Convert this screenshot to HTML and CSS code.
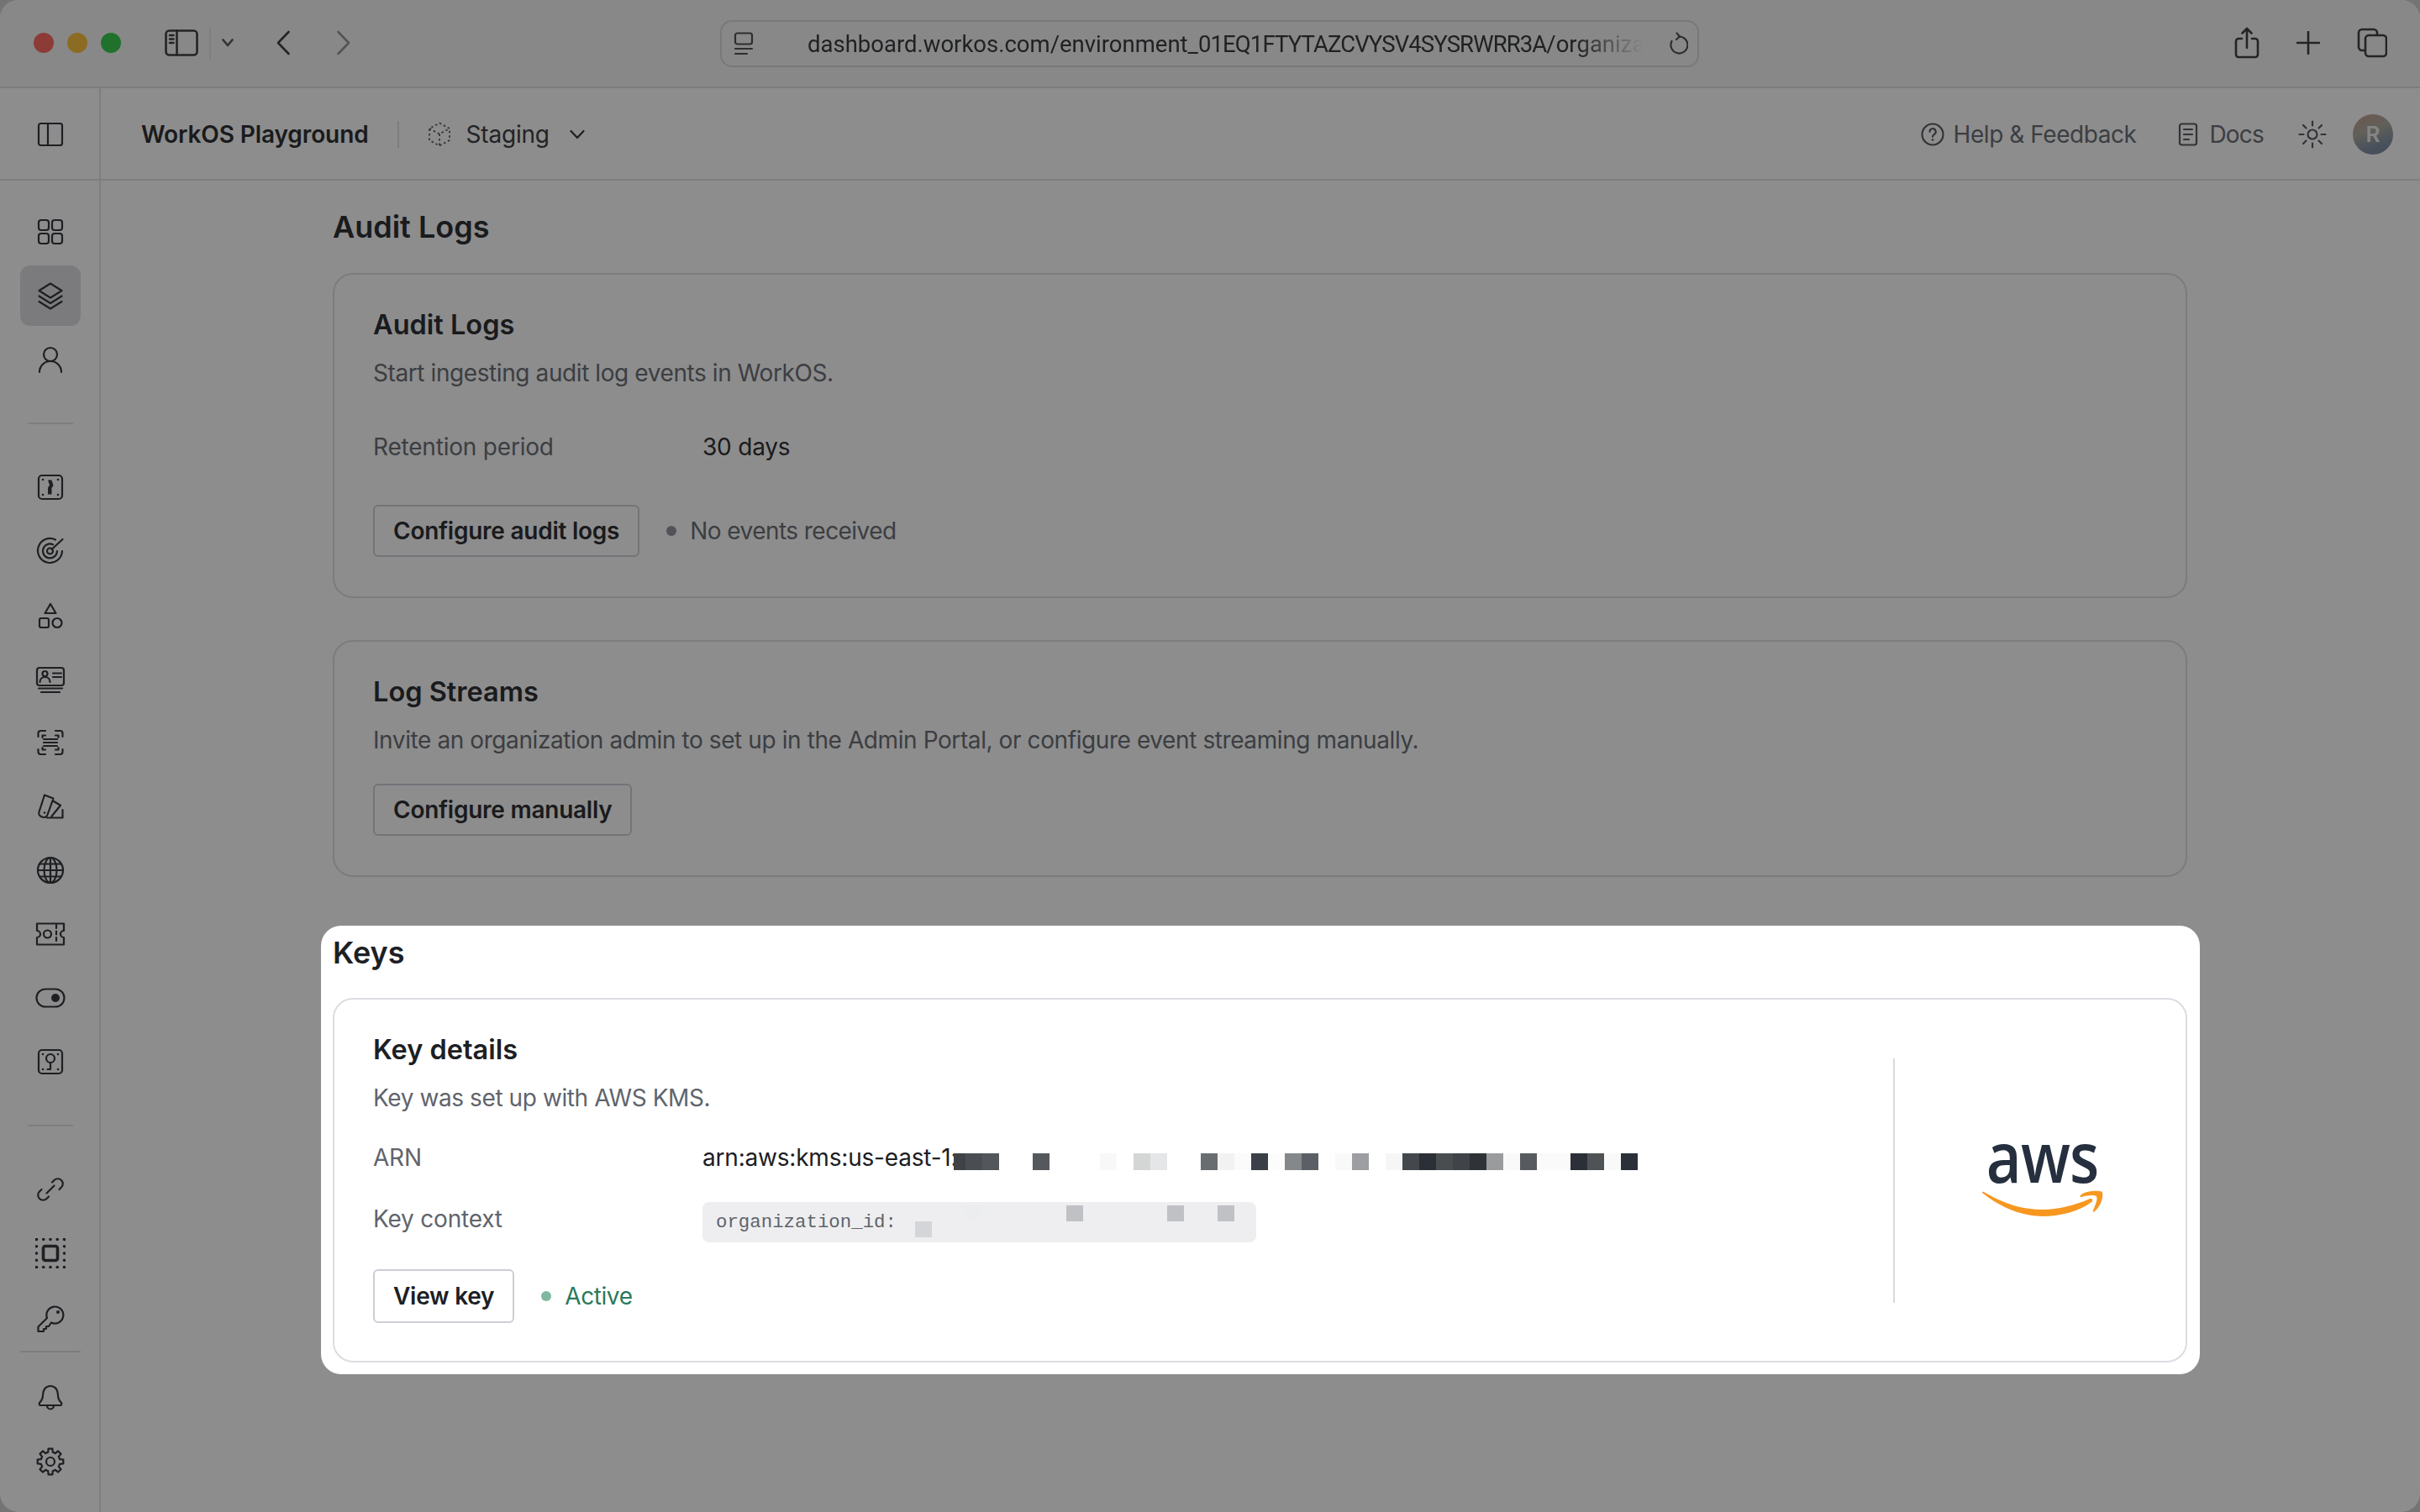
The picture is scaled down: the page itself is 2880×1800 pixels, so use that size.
FILE: index.html
```html
<!DOCTYPE html>
<html lang="en">
<head>
<meta charset="utf-8">
<title>WorkOS Playground</title>
<link rel="stylesheet" href="styles.css">
</head>
<body>
<div class="window">
  <header class="toolbar">
    <div class="lights"><span class="light red"></span><span class="light amber"></span><span class="light green"></span></div>
    <svg class="tb-sidebar" width="40" height="32" viewBox="0 0 40 32"><rect x="1.5" y="1.5" width="37" height="29" rx="4"/><path d="M14.5 1.5v29M6 7h4.5M6 11.500h4.500M6 16h4.500"/></svg>
    <span class="tb-sep"></span>
    <svg class="tb-chev" width="14" height="10" viewBox="0 0 14 10"><path d="M1.500 1.500 7 8l5.500-6.500"/></svg>
    <svg class="tb-back" width="18" height="30" viewBox="0 0 18 30"><path d="M15.500 2 3 15l12.500 13"/></svg>
    <svg class="tb-forward" width="18" height="30" viewBox="0 0 18 30"><path d="M2.500 2 15 15 2.500 28"/></svg>
    <div class="urlbar">
      <svg class="url-ico" width="24" height="28" viewBox="0 0 24 28"><rect x="2" y="1.500" width="20" height="13" rx="2.500"/><path d="M2 20h20M2 26h14"/></svg>
      <span class="url-text">dashboard.workos.com/environment_<span class="url-id">01EQ1FTYTAZCVYSV4SYSRWRR3A</span>/organizat</span>
      <svg class="url-reload" width="24" height="28" viewBox="0 0 24 28"><path d="M13 5.500A10 10 0 1 1 4.500 11"/><path d="M10.500 1.500 14 5.500l-4 3.500"/></svg>
    </div>
    <div class="tb-right">
      <svg class="tb-ico" width="30" height="38" viewBox="0 0 30 38"><path d="M9 14H5a3 3 0 0 0-3 3v16a3 3 0 0 0 3 3h20a3 3 0 0 0 3-3V17a3 3 0 0 0-3-3h-4M15 25V2M9.500 7.500 15 2l5.500 5.500"/></svg>
      <svg class="tb-ico tb-plus" width="28" height="28" viewBox="0 0 28 28"><path d="M14 1v26M1 14h26"/></svg>
      <svg class="tb-ico tb-tabs" width="36" height="36" viewBox="0 0 36 36"><path d="M9 27H6a4 4 0 0 1-4-4V6a4 4 0 0 1 4-4h14a4 4 0 0 1 4 4v3"/><rect x="10" y="9" width="25" height="25" rx="4"/></svg>
    </div>
  </header>

  <div class="app">
    <aside class="rail">
      <div class="rail-top">
        <svg class="ico" width="36" height="36" viewBox="0 0 36 36"><rect x="4" y="5" width="28" height="26" rx="2.500"/><path d="M15 5v26"/></svg>
      </div>
      <nav class="rail-nav">
        <a class="rail-item"><svg class="ico" width="36" height="36" viewBox="0 0 36 36"><rect x="4" y="4" width="12" height="12" rx="3"/><rect x="20" y="4" width="12" height="12" rx="3"/><rect x="4" y="20" width="12" height="12" rx="3"/><rect x="20" y="20" width="12" height="12" rx="3"/></svg></a>
        <a class="rail-item is-active"><svg class="ico" width="36" height="36" viewBox="0 0 36 36"><path d="M18 3.500 31.500 12 18 20.500 4.500 12zM4.500 18.500 18 27l13.500-8.500M4.500 25 18 33.500 31.500 25"/></svg></a>
        <a class="rail-item"><svg class="ico" width="36" height="36" viewBox="0 0 36 36"><circle cx="18" cy="12" r="8"/><path d="M5 33a13 13 0 0 1 26 0"/></svg></a>
        <div class="rail-rule"></div>
        <a class="rail-item"><svg class="ico" width="36" height="36" viewBox="0 0 36 36"><rect x="4" y="4" width="28" height="28" rx="4"/><path class="solid" d="M15 9.500h4.500l2 6.500-2 3v7.500H15v-8l2-3z"/><circle class="solid" cx="9" cy="9" r="1.300"/><circle class="solid" cx="27" cy="9" r="1.300"/><circle class="solid" cx="9" cy="27" r="1.300"/><circle class="solid" cx="27" cy="27" r="1.300"/></svg></a>
        <a class="rail-item"><svg class="ico" width="36" height="36" viewBox="0 0 36 36"><path d="M24 4.500A14.500 14.500 0 1 0 32 18M21 10.200A8.500 8.500 0 1 0 26 18"/><circle cx="17.500" cy="18" r="3.500"/><path d="M19.500 16 32.500 4"/></svg></a>
        <a class="rail-item"><svg class="ico" width="36" height="36" viewBox="0 0 36 36"><path d="M18 5l6.500 11h-13z"/><rect x="5" y="22" width="11" height="11" rx="2"/><circle cx="26" cy="27.500" r="5.500"/></svg></a>
        <a class="rail-item"><svg class="ico" width="36" height="36" viewBox="0 0 36 36"><rect x="2" y="5" width="32" height="21" rx="3"/><circle cx="11.500" cy="12" r="3"/><path d="M5.500 22c0-8 12-8 12 0M21 11.500h10M21 16h10M4 29.500h28M7 34h22"/></svg></a>
        <a class="rail-item"><svg class="ico" width="36" height="36" viewBox="0 0 36 36"><path d="M3.500 11V7a3 3 0 0 1 3-3H12M24 4h5.500a3 3 0 0 1 3 3v4M32.500 26v3a3 3 0 0 1-3 3H24M12 32H6.500a3 3 0 0 1-3-3v-3M8.500 12V9.500H12M24 9.500h3.500V12M27.500 24v2.500H24M12 26.500H8.500V24M10 14h16M10 18h16M10 22h16"/></svg></a>
        <a class="rail-item"><svg class="ico" width="36" height="36" viewBox="0 0 36 36"><path d="M11 4.500 21.500 8.500 14.500 28a4.500 4.500 0 0 1-5.500 2.800l-2-.7A4.500 4.500 0 0 1 4.500 24.500zM22 12l8 4.800-10.500 13M14 31.500h18.500V22"/><circle class="solid" cx="11" cy="25.500" r="1.300"/></svg></a>
        <a class="rail-item"><svg class="ico" width="36" height="36" viewBox="0 0 36 36"><circle cx="18" cy="18" r="15"/><ellipse cx="18" cy="18" rx="7.500" ry="15"/><path d="M18 3v30M3 18h30M5.500 10.500h25M5.500 25.500h25"/></svg></a>
        <a class="rail-item"><svg class="ico" width="36" height="36" viewBox="0 0 36 36"><path d="M2 5.500h32v8.500a4 4 0 0 0 0 8v8.500H2V22a4 4 0 0 0 0-8z"/><circle cx="14.500" cy="18" r="4.500"/><path d="M25 7v22" stroke-dasharray="4 3.500"/></svg></a>
        <a class="rail-item"><svg class="ico" width="36" height="36" viewBox="0 0 36 36"><rect x="1.500" y="7.500" width="33" height="21" rx="10.500"/><circle class="solid" cx="24" cy="18" r="5"/></svg></a>
        <a class="rail-item"><svg class="ico" width="36" height="36" viewBox="0 0 36 36"><rect x="4" y="4" width="28" height="28" rx="4"/><circle cx="18" cy="14" r="5"/><path d="M18 19v8h-3.500"/><circle class="solid" cx="9" cy="9" r="1.300"/><circle class="solid" cx="27" cy="9" r="1.300"/><circle class="solid" cx="9" cy="27" r="1.300"/><circle class="solid" cx="27" cy="27" r="1.300"/></svg></a>
        <div class="rail-rule"></div>
        <a class="rail-item"><svg class="ico" width="36" height="36" viewBox="0 0 36 36"><path d="M13.500 22.500l9-9M20 9.500l2.500-2.500a6 6 0 0 1 8.500 8.500L28.500 18M16 26.500 13.500 29a6 6 0 0 1-8.500-8.500L7.500 18"/></svg></a>
        <a class="rail-item"><svg class="ico" width="36" height="36" viewBox="0 0 36 36"><rect class="dots" x="1.500" y="1.500" width="33" height="33"/><rect class="thick" x="9.500" y="9.500" width="17" height="17" rx="2.500"/></svg></a>
        <a class="rail-item rail-key"><svg class="ico" width="36" height="36" viewBox="0 0 36 36"><path d="M19 22.500A10 10 0 1 0 14 17L3.500 27.500V33H10v-3h3v-3h3z"/><circle class="solid" cx="27" cy="10" r="2"/></svg></a>
      </nav>
      <div class="rail-foot">
        <a class="rail-item"><svg class="ico" width="36" height="36" viewBox="0 0 36 36"><path d="M18 4c-6 0-9 5-9 11 0 4-2 7-4 9-.8 1 0 3 1 3h24c1 0 1.800-2 1-3-2-2-4-5-4-9 0-6-3-11-9-11zM14 27.500a4 4 0 0 0 8 0"/></svg></a>
        <a class="rail-item"><svg class="ico" width="36" height="36" viewBox="0 0 36 36"><g transform="translate(18 18)"><polygon points="11.160,-2.780 15.310,-2.420 15.310,2.420 11.160,2.780 9.860,5.920 12.540,9.110 9.110,12.540 5.920,9.860 2.780,11.160 2.420,15.310 -2.420,15.310 -2.780,11.160 -5.920,9.860 -9.110,12.540 -12.540,9.110 -9.860,5.920 -11.160,2.780 -15.310,2.420 -15.310,-2.420 -11.160,-2.780 -9.860,-5.920 -12.540,-9.110 -9.110,-12.540 -5.920,-9.860 -2.780,-11.160 -2.420,-15.310 2.420,-15.310 2.780,-11.160 5.920,-9.860 9.110,-12.540 12.540,-9.110 9.860,-5.920"/><circle r="5"/></g></svg></a>
      </div>
    </aside>

    <div class="main">
      <div class="topbar">
        <span class="org">WorkOS Playground</span>
        <span class="top-sep"></span>
        <svg class="ico cube" width="30" height="30" viewBox="0 0 30 30"><path d="M15 1.500 27 8v14l-12 6.500L3 22V8zM3 8l12 6.500L27 8M15 14.500v14"/></svg>
        <span class="env">Staging</span>
        <svg class="ico env-chev" width="18" height="12" viewBox="0 0 18 12"><path d="M1.500 2 9 10l7.500-8"/></svg>
        <div class="top-right">
          <svg class="ico soft" width="28" height="28" viewBox="0 0 28 28"><circle cx="14" cy="14" r="12.500"/><path d="M10.500 10.800a3.600 3.600 0 1 1 5.400 3.100c-1.200.8-1.900 1.400-1.900 2.900"/><circle class="solid" cx="14" cy="20.500" r="1.300"/></svg>
          <span class="top-link first-link">Help &amp; Feedback</span>
          <svg class="ico soft doc" width="24" height="28" viewBox="0 0 24 28"><rect x="2" y="1.500" width="20" height="25" rx="2.500"/><path d="M7 8h10M7 14h10M7 20h6"/></svg>
          <span class="top-link second-link">Docs</span>
          <svg class="ico soft sun" width="34" height="34" viewBox="0 0 34 34"><circle cx="17" cy="17" r="5.500"/><path d="M17 1.500v5M17 27.500v5M1.500 17h5M27.500 17h5M6 6l3.500 3.500M24.500 24.500 28 28M6 28l3.500-3.500M24.500 9.500 28 6"/></svg>
          <span class="avatar">R</span>
        </div>
      </div>

      <main class="content">
        <section class="section">
          <h2 class="section-title">Audit Logs</h2>
          <div class="card card-pad">
            <h3 class="card-title">Audit Logs</h3>
            <p class="card-desc">Start ingesting audit log events in WorkOS.</p>
            <div class="row row-roomy"><span class="row-label">Retention period</span><span class="row-value">30 days</span></div>
            <div class="actions actions-roomy">
              <button class="btn">Configure audit logs</button>
              <span class="status"><i class="dot"></i>No events received</span>
            </div>
          </div>
        </section>

        <section class="section section-gap">
          <div class="card card-pad">
            <h3 class="card-title">Log Streams</h3>
            <p class="card-desc">Invite an organization admin to set up in the Admin Portal, or configure event streaming manually.</p>
            <div class="actions">
              <button class="btn">Configure manually</button>
            </div>
          </div>
        </section>

        <section class="section spotlight">
          <h2 class="section-title">Keys</h2>
          <div class="card card-split">
            <div class="card-pad split-main">
              <h3 class="card-title">Key details</h3>
              <p class="card-desc">Key was set up with AWS KMS.</p>
              <div class="row"><span class="row-label">ARN</span><span class="row-value arn">arn:aws:kms:us-east-1:<span class="redact-arn"></span></span></div>
              <div class="row row-code"><span class="row-label">Key context</span><code class="chip">organization_id:<span class="redact-chip"></span></code></div>
              <div class="actions">
                <button class="btn btn-tall">View key</button>
                <span class="status status-ok"><i class="dot"></i>Active</span>
              </div>
            </div>
            <div class="split-rule"></div>
            <div class="split-logo">
              <div class="aws">
                <span class="aws-word">aws</span>
                <svg class="aws-smile" width="144" height="32" viewBox="0 0 144 32"><path class="smile" d="M0 4C20 20 46 32 72 32c20 0 44-6 58-17 3-3 0-5-3-3.500C110 19 90 24 72 24 46 24 24 16 2 3c-1-.5-2 0-2 1z"/><path class="smile" d="M117 9c-1-1 0-2 1-3 6-4 19-5 24-3.500 3 1.500 1 15.500-8 23.500-2 1.500-3 .5-2-1 2-5 6-14 4-16.500-2-2.500-12-1.500-18 .5z"/></svg>
              </div>
            </div>
          </div>
        </section>
      </main>
    </div>
  </div>
  <div class="dim"></div>
</div>
</body>
</html>
```

FILE: styles.css
```css
* { box-sizing: border-box; }
html, body { margin: 0; height: 100%; }
body {
  background: #cfcfcf;
  font-family: Inter, "Liberation Sans", sans-serif;
  color: #1c2024;
  overflow: hidden;
}
h2, h3, p { margin: 0; font-weight: 600; }
svg { display: block; flex: none; fill: none; stroke-linecap: round; stroke-linejoin: round; }

.window {
  width: 2880px;
  height: 1800px;
  background: #fff;
  border-radius: 22px;
  overflow: hidden;
  display: flex;
  flex-direction: column;
}
.dim {
  position: fixed;
  inset: 0;
  background: rgba(22, 22, 22, .49);
  z-index: 1;
}

/* browser toolbar */
.toolbar {
  height: 105px;
  flex: none;
  background: #f6f6f6;
  border-bottom: 2px solid #dcdcdc;
  display: flex;
  align-items: center;
  padding: 0 39px 1px 40px;
}
.lights { display: flex; gap: 16px; }
.light { width: 24px; height: 24px; border-radius: 50%; }
.red { background: #ff5f57; }
.amber { background: #febc2e; }
.green { background: #28c840; }
.toolbar svg { stroke: #303236; stroke-width: 2.600; }
.tb-sidebar { margin-left: 52px; }
.tb-sep { width: 2px; height: 38px; background: #e2e2e2; margin-left: 13px; }
.toolbar .tb-chev { margin-left: 13px; stroke: #4c4e52; }
.tb-back { margin-left: 50px; }
.toolbar .tb-forward { margin-left: 54px; stroke: #8d8f92; }
.urlbar {
  margin-left: 439px;
  width: 1165px;
  height: 56px;
  flex: none;
  margin-top: 2px;
  border: 2px solid #d6d6d6;
  border-radius: 14px;
  display: flex;
  align-items: center;
  padding: 0 11px 0 14px;
}
.toolbar .url-ico { stroke-width: 2.200; stroke: #44464a; }
.url-text {
  margin-left: 64px;
  width: 994px;
  flex: none;
  white-space: nowrap;
  font-family: Roboto, "Liberation Sans", sans-serif;
  font-size: 27.500px;
  color: #2a2c30;
  -webkit-mask-image: linear-gradient(90deg, #000 92%, transparent 100%);
  mask-image: linear-gradient(90deg, #000 92%, transparent 100%);
}
.url-id { letter-spacing: -.9px; }
.toolbar .url-reload { margin-left: auto; stroke-width: 2.200; stroke: #44464a; }
.tb-right { margin-left: auto; display: flex; align-items: center; }
.tb-plus { margin-left: 44px; }
.tb-tabs { margin-left: 44px; }

/* application */
.app { flex: 1; display: flex; min-height: 0; }
.ico { stroke: #25282d; stroke-width: 2.200; }
.ico .solid { fill: #25282d; stroke: none; }
.ico .dots { stroke-dasharray: 0 8.250; stroke-width: 3.600; }
.ico .thick { stroke-width: 3.600; }

.rail {
  width: 120px;
  flex: none;
  border-right: 2px solid #e0e1e4;
  display: flex;
  flex-direction: column;
}
.rail-top {
  height: 110px;
  flex: none;
  border-bottom: 2px solid #e0e1e4;
  margin-right: -2px;
  padding-top: 1px;
  display: flex;
  align-items: center;
  justify-content: center;
}
.rail-nav { padding: 23px 0 0 2px; display: flex; flex-direction: column; align-items: center; }
.rail-item {
  width: 72px;
  height: 72px;
  margin: 2px 0;
  border-radius: 12px;
  display: flex;
  align-items: center;
  justify-content: center;
}
.rail-key { margin-top: 4px; }
.is-active { background: #dcdce0; }
.rail-rule { width: 54px; height: 2px; margin: 37px 0; background: #e0e1e4; }
.rail-foot {
  margin: 2px 0 0 24px;
  width: 72px;
  padding-top: 16px;
  display: flex;
  flex-direction: column;
  align-items: center;
  box-shadow: 0 -2px 0 0 #e0e1e4;
}

.main { flex: 1; min-width: 0; display: flex; flex-direction: column; padding-right: 1px; }
.topbar {
  height: 110px;
  flex: none;
  margin-right: -1px;
  border-bottom: 2px solid #e0e1e4;
  padding: 1px 32px 0 48px;
  display: flex;
  align-items: center;
}
.org { font-size: 28px; font-weight: 600; letter-spacing: -.1px; }
.top-sep { width: 2px; height: 32px; background: #dfe0e3; margin-left: 34px; }
.cube { margin-left: 33px; stroke-width: 1.900; stroke: #55585e; stroke-dasharray: 2.500 3; stroke-linecap: butt; }
.env { font-size: 28px; margin-left: 17px; color: #2b2f35; letter-spacing: -.2px; }
.env-chev { margin-left: 24px; }
.top-right { margin-left: auto; display: flex; align-items: center; }
.soft { stroke: #4c5057; }
.soft .solid { fill: #4c5057; }
.top-link { font-size: 28px; color: #60646c; letter-spacing: -.45px; }
.first-link { margin-left: 11px; }
.doc { margin-left: 50px; }
.second-link { margin-left: 13px; letter-spacing: -.8px; }
.sun { margin-left: 41px; }
.avatar {
  margin-left: 31px;
  width: 48px;
  height: 48px;
  border-radius: 50%;
  background: linear-gradient(160deg, #c49488 0%, #a9a79a 40%, #78899f 75%, #6f7f98 100%);
  color: #eceff3;
  font-size: 26px;
  font-weight: 600;
  display: flex;
  align-items: center;
  justify-content: center;
}

.content { width: 2207px; margin: 0 auto; padding-top: 31px; }
.section-gap { margin-top: 50px; }
.section-title { font-size: 36px; line-height: 48px; letter-spacing: 0; margin-bottom: 31px; }
.card { border: 2px solid #dcdde2; border-radius: 24px; background: #fff; }
.card-pad { padding: 40px 45px 47px 46px; }
.card-title { font-size: 32.500px; line-height: 40px; letter-spacing: 0; }
.card-desc { font-size: 28px; line-height: 40px; font-weight: 400; color: #60646c; margin-top: 17px; letter-spacing: -.41px; }
.row { display: flex; font-size: 28px; line-height: 40px; margin-top: 31px; letter-spacing: -.2px; }
.row-roomy { margin-top: 48px; }
.row-code { margin-top: 33px; }
.row-label { width: 392px; flex: none; color: #60646c; }
.row-value { color: #1c2024; }
.actions { display: flex; align-items: center; margin-top: 32px; }
.actions-roomy { margin-top: 49px; }
.btn {
  height: 62px;
  padding: 0 22px;
  border: 2px solid #cdced6;
  border-radius: 6px;
  background: #fff;
  font: 600 28px Inter, "Liberation Sans", sans-serif;
  letter-spacing: -.25px;
  color: #1c2024;
}
.btn-tall { height: 64px; }
.status { display: flex; align-items: center; margin-left: 32px; font-size: 28px; color: #60646c; letter-spacing: -.55px; }
.dot { width: 12px; height: 12px; border-radius: 50%; background: #8b8d98; margin-right: 16px; }
.status-ok { color: #2b7a5b; letter-spacing: -.4px; }
.status-ok .dot { background: #7fb8a0; }

/* highlighted section */
.spotlight {
  position: relative;
  z-index: 2;
  margin: 58px -15px 0 -14px;
  padding: 8px 15px 14px 14px;
  background: #fff;
  border-radius: 24px;
}
.spotlight .section-title { margin-bottom: 30px; }
.card-split { display: flex; align-items: center; }
.split-main { flex: 1; min-width: 0; padding-bottom: 45px; }
.split-rule { width: 2px; height: 291px; background: #d9dade; flex: none; }
.split-logo { width: 346px; flex: none; display: flex; justify-content: center; padding-left: 6px; }

.arn { position: relative; }
.redact-arn {
  position: absolute;
  left: 299px;
  top: 15px;
  width: 814px;
  height: 20px;
  background: linear-gradient(90deg,
    #3f4247 0 14px, #4a4d51 14px 34px, #53565a 34px 54px, #fff 54px 94px,
    #55585c 94px 114px, #fff 114px 174px, #f8f8f8 174px 194px, #fff 194px 214px,
    #d4d5d5 214px 234px, #e5e6e7 234px 254px, #fff 254px 294px,
    #6a6d70 294px 314px, #f2f2f2 314px 334px, #fbfbfb 334px 354px,
    #3b3f47 354px 374px, #fcfcfc 374px 394px, #85888b 394px 414px, #5c5f65 414px 434px,
    #fff 434px 454px, #f9f9f9 454px 474px, #9d9ea1 474px 494px, #fff 494px 514px,
    #f6f6f6 514px 534px, #44474b 534px 554px, #2b2f36 554px 574px, #4a4d50 574px 594px,
    #404347 594px 614px, #2f3338 614px 634px, #999b9d 634px 654px, #f9f9f9 654px 674px,
    #575a5e 674px 694px, #fafafa 694px 734px, #2b2f37 734px 754px, #505356 754px 774px,
    #f9f9f9 774px 794px, #2b2f37 794px 814px);
}
.chip {
  position: relative;
  display: block;
  width: 659px;
  height: 48px;
  padding-left: 16px;
  border-radius: 8px;
  background: #eeeef0;
  font-family: "Liberation Mono", monospace;
  font-size: 22.400px;
  line-height: 48px;
  letter-spacing: 0;
  color: #60646c;
}
.redact-chip {
  position: absolute;
  left: 253px;
  top: 23px;
  width: 20px;
  height: 19px;
  background: #d4d5d9;
}
.redact-chip::after {
  content: "";
  position: absolute;
  left: 60px;
  top: -19px;
  width: 320px;
  height: 19px;
  background: linear-gradient(90deg,
    #ebedee 0 20px, transparent 20px 120px, #c0c1c4 120px 140px,
    transparent 140px 240px, #c0c1c4 240px 260px,
    transparent 260px 300px, #c0c1c4 300px 320px);
}

.aws { width: 144px; display: flex; flex-direction: column; align-items: center; }
.aws-word {
  font-family: "Open Sans", sans-serif;
  font-weight: 600;
  font-size: 84px;
  line-height: 25px;
  height: 53px;
  letter-spacing: -1px;
  color: #252f3e;
  transform: scaleX(.86);
}
.smile { fill: #f79720; }
```
